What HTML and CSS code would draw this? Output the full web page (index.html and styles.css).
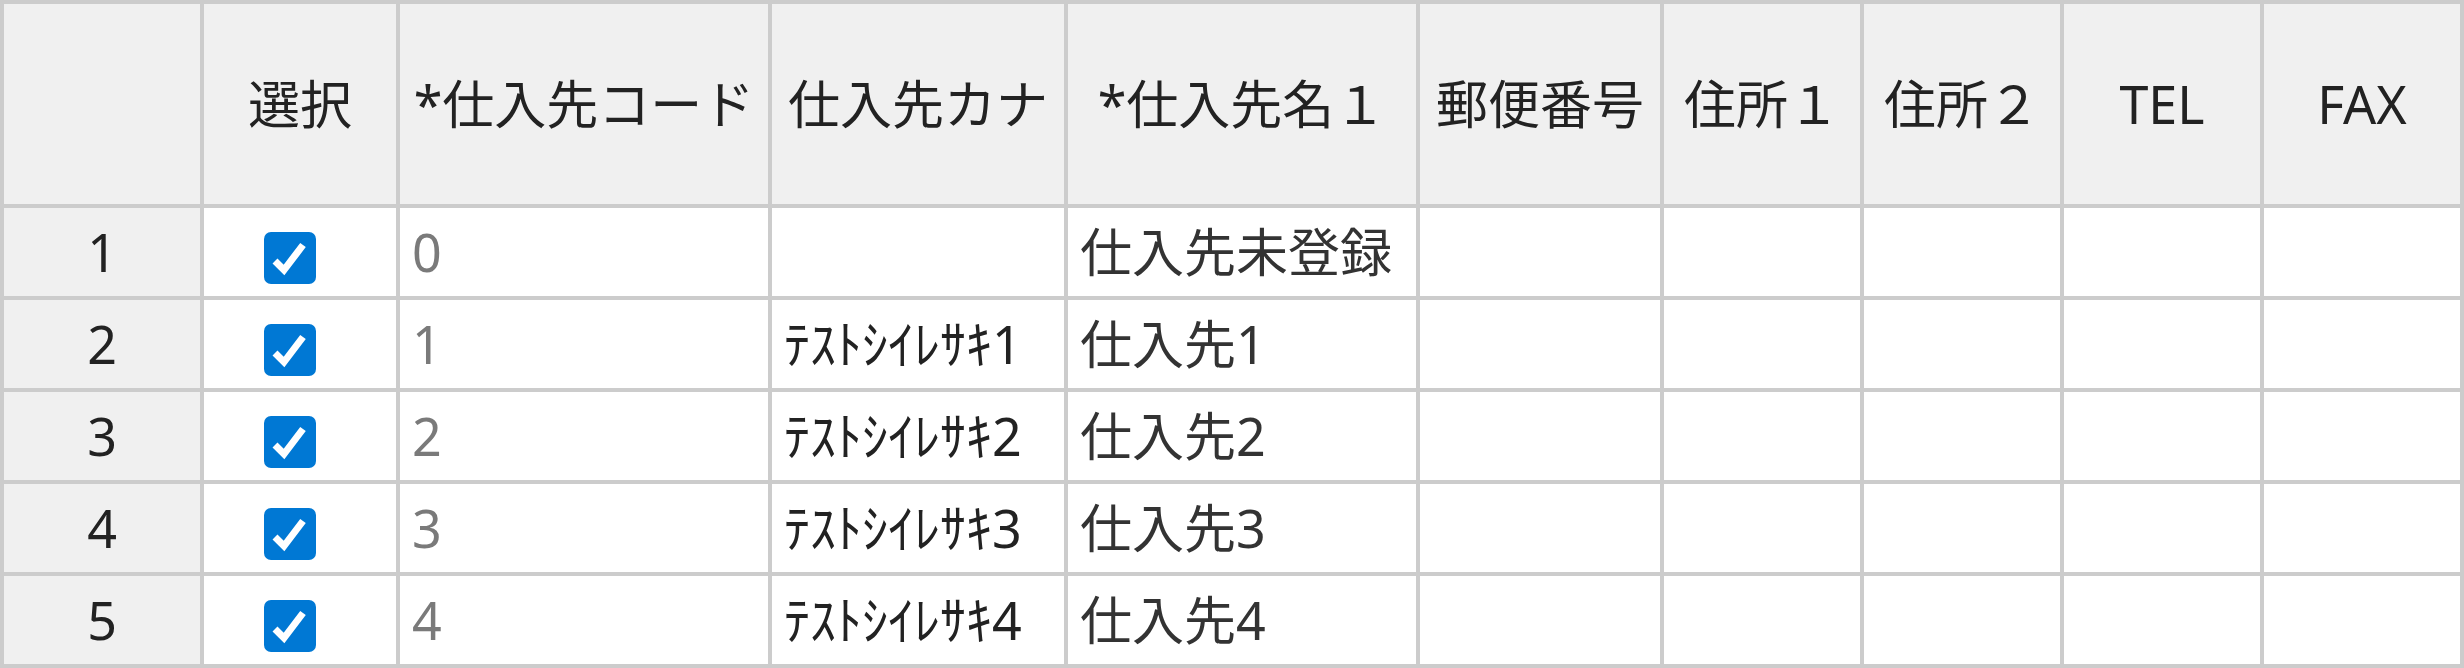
FILE: index.html
```html
<!DOCTYPE html>
<html lang="ja">
<head>
<meta charset="utf-8">
<title>仕入先一覧</title>
<link rel="stylesheet" href="styles.css">
</head>
<body>
<table class="grid">
  <colgroup>
    <col class="c-row"><col class="c-sel"><col class="c-code"><col class="c-kana"><col class="c-name"><col class="c-zip"><col class="c-addr"><col class="c-addr"><col class="c-tel"><col class="c-fax">
  </colgroup>
  <thead>
    <tr class="head">
      <th class="rowhead"></th>
      <th>選択</th>
      <th>*仕入先コード</th>
      <th>仕入先カナ</th>
      <th>*仕入先名１</th>
      <th>郵便番号</th>
      <th>住所１</th>
      <th>住所２</th>
      <th>TEL</th>
      <th>FAX</th>
    </tr>
  </thead>
  <tbody>
    <tr>
      <td class="rowhead">1</td>
      <td class="sel"><svg class="chk" viewBox="0 0 52 52"><rect x="0" y="0" width="52" height="52" rx="7" fill="#0078d4"/><polyline points="11,29 20,38 39,13" fill="none" stroke="#fff" stroke-width="7"/></svg></td>
      <td class="code">0</td>
      <td class="kana"></td>
      <td class="name">仕入先未登録</td>
      <td></td><td></td><td></td><td></td><td></td>
    </tr>
    <tr>
      <td class="rowhead">2</td>
      <td class="sel"><svg class="chk" viewBox="0 0 52 52"><rect x="0" y="0" width="52" height="52" rx="7" fill="#0078d4"/><polyline points="11,29 20,38 39,13" fill="none" stroke="#fff" stroke-width="7"/></svg></td>
      <td class="code">1</td>
      <td class="kana">ﾃｽﾄｼｲﾚｻｷ1</td>
      <td class="name">仕入先1</td>
      <td></td><td></td><td></td><td></td><td></td>
    </tr>
    <tr>
      <td class="rowhead">3</td>
      <td class="sel"><svg class="chk" viewBox="0 0 52 52"><rect x="0" y="0" width="52" height="52" rx="7" fill="#0078d4"/><polyline points="11,29 20,38 39,13" fill="none" stroke="#fff" stroke-width="7"/></svg></td>
      <td class="code">2</td>
      <td class="kana">ﾃｽﾄｼｲﾚｻｷ2</td>
      <td class="name">仕入先2</td>
      <td></td><td></td><td></td><td></td><td></td>
    </tr>
    <tr>
      <td class="rowhead">4</td>
      <td class="sel"><svg class="chk" viewBox="0 0 52 52"><rect x="0" y="0" width="52" height="52" rx="7" fill="#0078d4"/><polyline points="11,29 20,38 39,13" fill="none" stroke="#fff" stroke-width="7"/></svg></td>
      <td class="code">3</td>
      <td class="kana">ﾃｽﾄｼｲﾚｻｷ3</td>
      <td class="name">仕入先3</td>
      <td></td><td></td><td></td><td></td><td></td>
    </tr>
    <tr>
      <td class="rowhead">5</td>
      <td class="sel"><svg class="chk" viewBox="0 0 52 52"><rect x="0" y="0" width="52" height="52" rx="7" fill="#0078d4"/><polyline points="11,29 20,38 39,13" fill="none" stroke="#fff" stroke-width="7"/></svg></td>
      <td class="code">4</td>
      <td class="kana">ﾃｽﾄｼｲﾚｻｷ4</td>
      <td class="name">仕入先4</td>
      <td></td><td></td><td></td><td></td><td></td>
    </tr>
  </tbody>
</table>
</body>
</html>
```

FILE: styles.css
```css
html, body {
  margin: 0;
  padding: 0;
  background: #ffffff;
}

body {
  font-family: "Noto Sans", "Noto Sans CJK JP", sans-serif;
  font-size: 52px;
  color: #222222;
}

.grid {
  table-layout: fixed;
  width: 2464px;
  border-collapse: separate;
  border-spacing: 4px;
  background: #cccccc;
}

.c-row { width: 196px; }
.c-sel { width: 192px; }
.c-code { width: 368px; }
.c-kana { width: 292px; }
.c-name { width: 348px; }
.c-zip { width: 240px; }
.c-addr { width: 196px; }
.c-tel { width: 196px; }
.c-fax { width: 196px; }

.grid th,
.grid td {
  padding: 0 12px;
  overflow: hidden;
  white-space: nowrap;
  line-height: 1.2;
  vertical-align: middle;
  background: #ffffff;
}

.head th {
  height: 200px;
  background: #f0f0f0;
  font-weight: normal;
  text-align: center;
  color: #222222;
}

.grid tbody td {
  height: 88px;
  box-sizing: border-box;
}

.grid td.rowhead {
  background: #f0f0f0;
  text-align: center;
  color: #222222;
}

.grid td.sel {
  padding: 24px 0 0 60px;
  vertical-align: top;
  line-height: 0;
}

.chk {
  display: block;
  width: 52px;
  height: 52px;
}

.grid td.code {
  color: #7a7a7a;
}

.grid td.kana {
  color: #222222;
}

.grid td.name {
  color: #333333;
}
```
